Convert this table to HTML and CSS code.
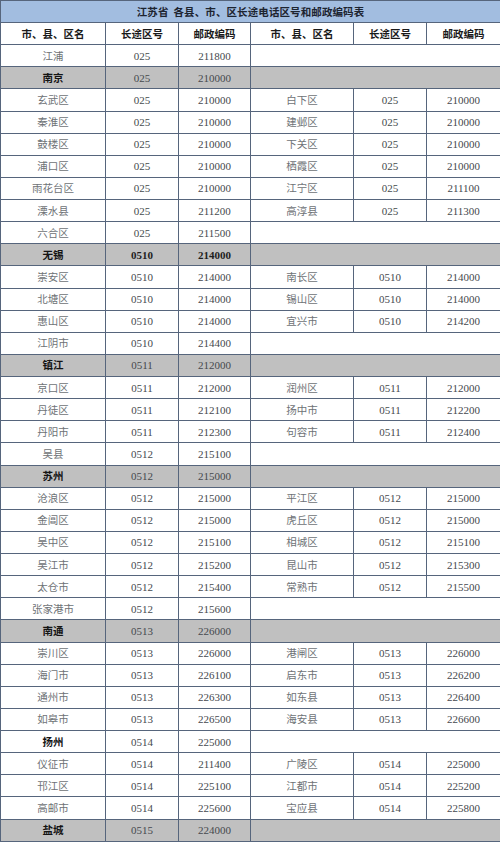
FILE: index.html
```html
<!DOCTYPE html>
<html lang="zh-CN">
<head>
<meta charset="utf-8">
<title>江苏省各县、市、区长途电话区号和邮政编码表</title>
<link rel="stylesheet" href="styles.css">
</head>
<body>
<table class="codes">
<colgroup>
<col class="c-name"><col class="c-code"><col class="c-post">
<col class="c-name2"><col class="c-code"><col class="c-post2">
</colgroup>
<tr class="title"><th colspan="6">江苏省&nbsp;&nbsp;各县、市、区长途电话区号和邮政编码表</th></tr>
<tr class="head"><th>市、县、区名</th><th>长途区号</th><th>邮政编码</th><th>市、县、区名</th><th>长途区号</th><th>邮政编码</th></tr>
<tr><td class="nm">江浦</td><td>025</td><td>211800</td><td class="blank" colspan="3"></td></tr>
<tr class="city"><td class="nm">南京</td><td>025</td><td>210000</td><td class="blank" colspan="3"></td></tr>
<tr><td class="nm">玄武区</td><td>025</td><td>210000</td><td class="nm">白下区</td><td>025</td><td>210000</td></tr>
<tr><td class="nm">秦淮区</td><td>025</td><td>210000</td><td class="nm">建邺区</td><td>025</td><td>210000</td></tr>
<tr><td class="nm">鼓楼区</td><td>025</td><td>210000</td><td class="nm">下关区</td><td>025</td><td>210000</td></tr>
<tr><td class="nm">浦口区</td><td>025</td><td>210000</td><td class="nm">栖霞区</td><td>025</td><td>210000</td></tr>
<tr><td class="nm">雨花台区</td><td>025</td><td>210000</td><td class="nm">江宁区</td><td>025</td><td>211100</td></tr>
<tr><td class="nm">溧水县</td><td>025</td><td>211200</td><td class="nm">高淳县</td><td>025</td><td>211300</td></tr>
<tr><td class="nm">六合区</td><td>025</td><td>211500</td><td class="blank" colspan="3"></td></tr>
<tr class="city strong"><td class="nm">无锡</td><td>0510</td><td>214000</td><td class="blank" colspan="3"></td></tr>
<tr><td class="nm">崇安区</td><td>0510</td><td>214000</td><td class="nm">南长区</td><td>0510</td><td>214000</td></tr>
<tr><td class="nm">北塘区</td><td>0510</td><td>214000</td><td class="nm">锡山区</td><td>0510</td><td>214000</td></tr>
<tr><td class="nm">惠山区</td><td>0510</td><td>214000</td><td class="nm">宜兴市</td><td>0510</td><td>214200</td></tr>
<tr><td class="nm">江阴市</td><td>0510</td><td>214400</td><td class="blank" colspan="3"></td></tr>
<tr class="city"><td class="nm">镇江</td><td>0511</td><td>212000</td><td class="blank" colspan="3"></td></tr>
<tr><td class="nm">京口区</td><td>0511</td><td>212000</td><td class="nm">润州区</td><td>0511</td><td>212000</td></tr>
<tr><td class="nm">丹徒区</td><td>0511</td><td>212100</td><td class="nm">扬中市</td><td>0511</td><td>212200</td></tr>
<tr><td class="nm">丹阳市</td><td>0511</td><td>212300</td><td class="nm">句容市</td><td>0511</td><td>212400</td></tr>
<tr><td class="nm">吴县</td><td>0512</td><td>215100</td><td class="blank" colspan="3"></td></tr>
<tr class="city"><td class="nm">苏州</td><td>0512</td><td>215000</td><td class="blank" colspan="3"></td></tr>
<tr><td class="nm">沧浪区</td><td>0512</td><td>215000</td><td class="nm">平江区</td><td>0512</td><td>215000</td></tr>
<tr><td class="nm">金阊区</td><td>0512</td><td>215000</td><td class="nm">虎丘区</td><td>0512</td><td>215000</td></tr>
<tr><td class="nm">吴中区</td><td>0512</td><td>215100</td><td class="nm">相城区</td><td>0512</td><td>215100</td></tr>
<tr><td class="nm">吴江市</td><td>0512</td><td>215200</td><td class="nm">昆山市</td><td>0512</td><td>215300</td></tr>
<tr><td class="nm">太仓市</td><td>0512</td><td>215400</td><td class="nm">常熟市</td><td>0512</td><td>215500</td></tr>
<tr><td class="nm">张家港市</td><td>0512</td><td>215600</td><td class="blank" colspan="3"></td></tr>
<tr class="city"><td class="nm">南通</td><td>0513</td><td>226000</td><td class="blank" colspan="3"></td></tr>
<tr><td class="nm">崇川区</td><td>0513</td><td>226000</td><td class="nm">港闸区</td><td>0513</td><td>226000</td></tr>
<tr><td class="nm">海门市</td><td>0513</td><td>226100</td><td class="nm">启东市</td><td>0513</td><td>226200</td></tr>
<tr><td class="nm">通州市</td><td>0513</td><td>226300</td><td class="nm">如东县</td><td>0513</td><td>226400</td></tr>
<tr><td class="nm">如皋市</td><td>0513</td><td>226500</td><td class="nm">海安县</td><td>0513</td><td>226600</td></tr>
<tr class="plain-city"><td class="nm">扬州</td><td>0514</td><td>225000</td><td class="blank" colspan="3"></td></tr>
<tr><td class="nm">仪征市</td><td>0514</td><td>211400</td><td class="nm">广陵区</td><td>0514</td><td>225000</td></tr>
<tr><td class="nm">邗江区</td><td>0514</td><td>225100</td><td class="nm">江都市</td><td>0514</td><td>225200</td></tr>
<tr><td class="nm">高邮市</td><td>0514</td><td>225600</td><td class="nm">宝应县</td><td>0514</td><td>225800</td></tr>
<tr class="city"><td class="nm">盐城</td><td>0515</td><td>224000</td><td class="blank" colspan="3"></td></tr>
</table>
</body>
</html>
```

FILE: styles.css
```css
html, body {
  margin: 0;
  padding: 0;
  background: #ffffff;
}

.codes {
  width: 499px;
  border-collapse: collapse;
  table-layout: fixed;
  font-family: "Liberation Serif", "Noto Sans CJK SC", serif;
  font-size: 11px;
  color: #45494e;
}

.c-name { width: 105px; }
.c-code { width: 73px; }
.c-post { width: 72px; }
.c-name2 { width: 103px; }
.c-post2 { width: 74px; }

.codes th,
.codes td {
  border: 1px solid #56657c;
  padding: 0;
  text-align: center;
  vertical-align: middle;
  line-height: 12px;
  white-space: nowrap;
}

.codes tr {
  height: 22.14px;
}

.codes .title {
  height: 22px;
}

.codes .title th {
  background: #a2bde0;
  color: #1d2430;
  font-family: "Noto Sans CJK SC", sans-serif;
  font-weight: 700;
  font-size: 10.5px;
  letter-spacing: 0.1px;
}

.codes .head th {
  font-family: "Noto Sans CJK SC", sans-serif;
  font-weight: 700;
  font-size: 10.5px;
  color: #1a1a1a;
}

.codes .nm {
  font-family: "Noto Sans CJK SC", sans-serif;
  color: #6e7276;
  font-size: 10.5px;
}

.codes .city td {
  background: #c0c0c0;
}

.codes .city .nm,
.codes .plain-city .nm {
  font-weight: 700;
  color: #141414;
}

.codes .strong td {
  font-weight: 700;
  color: #1e1e1e;
}
```
